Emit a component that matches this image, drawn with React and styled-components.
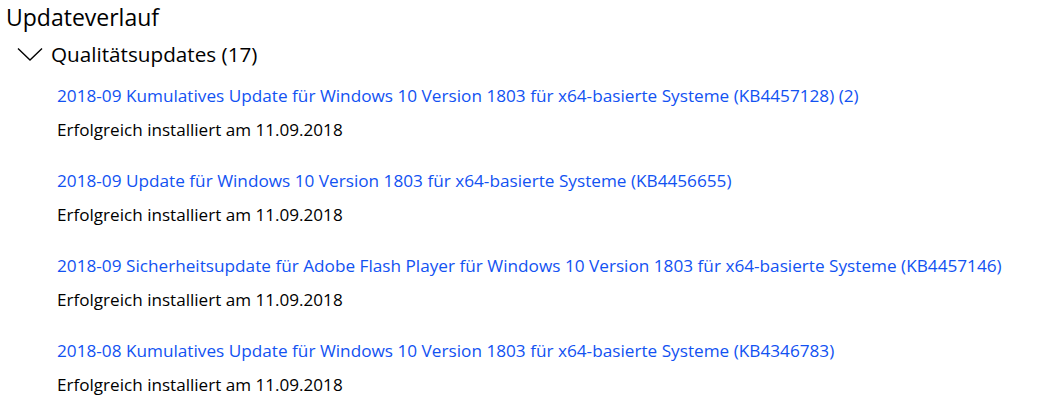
import React from 'react';
import styled, { createGlobalStyle } from 'styled-components';

const GlobalStyle = createGlobalStyle`
    html, body {
        margin:0;
        padding:0;
        background:#ffffff;
    }
    body {
        font-family:"Open Sans", "Noto Sans", "Liberation Sans", sans-serif;
        color:#000000;
    }
`;

const Page = styled.div`
    width:1050px;
    height:419px;
    overflow:hidden;
    padding:0 0 0 6px;
    box-sizing:border-box;
`;
const Heading = styled.h1`
    margin:0;
    padding-top:2px;
    font-size:23px;
    font-weight:400;
    line-height:30px;
`;
const Group = styled.div`
    margin-top:9px;
`;
const GroupHeader = styled.div`
    display:flex;
    align-items:center;
    gap:8px;
    padding-left:11px;
    height:26px;
`;
const GroupTitle = styled.span`
    font-size:20.7px;
    line-height:26px;
`;
const List = styled.ul`
    list-style:none;
    margin:0;
    padding:18px 0 0 51px;
`;
const Item = styled.li`
    margin-bottom:29px;
`;
const UpdateLink = styled.a`
    display:block;
    color:#1252f2;
    text-decoration:none;
    font-size:17.2px;
    line-height:22px;
    cursor:pointer;
`;
const Status = styled.div`
    margin-top:12px;
    font-size:17.1px;
    line-height:22px;
`;

const updates = [
    '2018-09 Kumulatives Update für Windows 10 Version 1803 für x64-basierte Systeme (KB4457128) (2)',
    '2018-09 Update für Windows 10 Version 1803 für x64-basierte Systeme (KB4456655)',
    '2018-09 Sicherheitsupdate für Adobe Flash Player für Windows 10 Version 1803 für x64-basierte Systeme (KB4457146)',
    '2018-08 Kumulatives Update für Windows 10 Version 1803 für x64-basierte Systeme (KB4346783)',
];

const Chevron = () => (
    <svg width="26" height="14" viewBox="0 0 26 14" fill="none">
        <path d="M1 1.5 L13 13 L25 1.5" stroke="#000" strokeWidth="1.4" />
    </svg>
);

const App = () => {
    return (
        <Page>
            <GlobalStyle />
            <Heading>Updateverlauf</Heading>
            <Group>
                <GroupHeader>
                    <Chevron />
                    <GroupTitle>Qualitätsupdates (17)</GroupTitle>
                </GroupHeader>
                <List>
                    {updates.map((u) => (
                        <Item key={u}>
                            <UpdateLink>{u}</UpdateLink>
                            <Status>Erfolgreich installiert am 11.09.2018</Status>
                        </Item>
                    ))}
                </List>
            </Group>
        </Page>
    );
};

export default App;
